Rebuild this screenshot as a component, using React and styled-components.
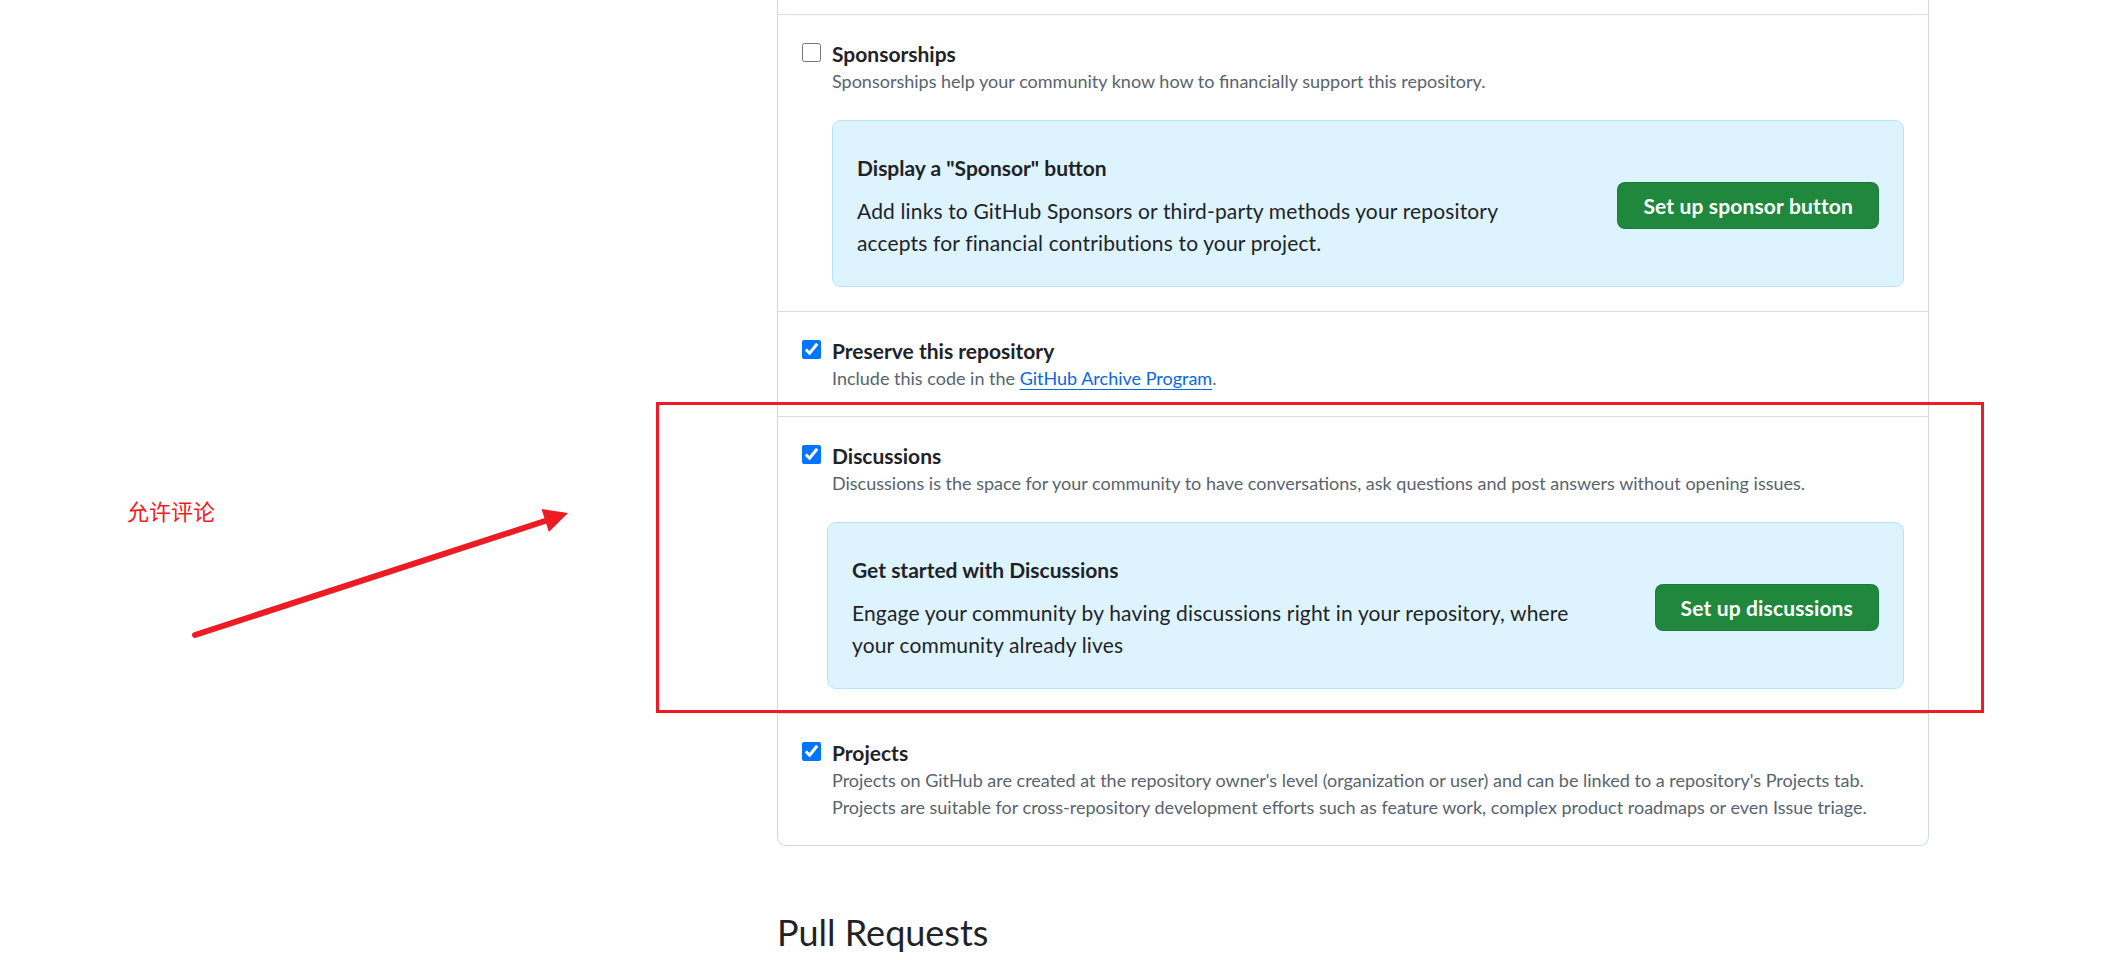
import React from 'react'
import styled, { createGlobalStyle } from 'styled-components'

const GlobalStyle = createGlobalStyle`
  html, body {
    margin: 0;
    padding: 0;
    background: #ffffff;
  }
  body {
    font-family: Lato, "Noto Sans CJK SC", sans-serif;
    color: #1f2328;
    overflow: hidden;
  }
`

const Page = styled.div`
  position: relative;
  width: 2121px;
  height: 960px;
  overflow: hidden;
  display: grid;
  grid-template-columns: 777px 1152px;
`

const Main = styled.main`
  grid-column: 2;
`

const Box = styled.div`
  border: 1px solid #d1d9e0;
  border-top: 0;
  border-radius: 0 0 9px 9px;
`

// tail of the row above, scrolled out of view
const CutRow = styled.div`
  height: 14px;
  border-bottom: 1px solid #d8dee4;
`

const Row = styled.div`
  padding: 24px;
  & + & {
    border-top: 1px solid #d8dee4;
  }
`

const Field = styled.label`
  display: flex;
  align-items: flex-start;
  gap: 11px;
`

const Check = styled.input`
  flex: none;
  width: 19px;
  height: 19px;
  margin: 4px 0 0;
  accent-color: #0075ff;
`

const FieldText = styled.div`
  display: flex;
  flex-direction: column;
`

const Title = styled.span`
  font-size: 21px;
  font-weight: 700;
  line-height: 29px;
  color: #1f2328;
`

const Note = styled.span`
  font-size: 18px;
  line-height: 27px;
  color: #59636e;
`

const Link = styled.a`
  color: #0969da;
  text-decoration: underline;
  text-underline-offset: 4px;
`

const Callout = styled.div`
  margin: 25px 0 0 ${p => p.$inset}px;
  display: flex;
  align-items: center;
  justify-content: space-between;
  padding: 31px 24px 27px;
  background: #ddf4ff;
  border: 1px solid #b6e3ff;
  border-radius: 9px;
`

const CalloutText = styled.div`
  display: flex;
  flex-direction: column;
`

const CalloutTitle = styled.h3`
  margin: 0 0 11px;
  font-size: 21px;
  font-weight: 700;
  line-height: 32px;
`

const CalloutBody = styled.p`
  margin: 0;
  font-size: 21px;
  line-height: 32px;
  letter-spacing: 0.15px;
`

const GreenButton = styled.button`
  flex: none;
  padding: 7.5px 25px;
  font-family: inherit;
  font-size: 21px;
  font-weight: 700;
  line-height: 30px;
  letter-spacing: 0.15px;
  color: #ffffff;
  background: #1f883d;
  border: 1px solid rgba(31, 35, 40, 0.15);
  border-radius: 8px;
`

const Heading = styled.h2`
  margin: 59px 0 0;
  font-size: 36px;
  font-weight: 400;
  line-height: 54px;
  color: #1f2328;
`

const RedFrame = styled.div`
  position: absolute;
  left: 656px;
  top: 402px;
  width: 1328px;
  height: 311px;
  box-sizing: border-box;
  border: 3px solid #ed1c24;
  pointer-events: none;
`

const RedLabel = styled.div`
  position: absolute;
  left: 127px;
  top: 499px;
  font-family: "Noto Sans CJK SC", sans-serif;
  font-size: 22px;
  line-height: 22px;
  color: #ed1c24;
`

const ArrowSvg = styled.svg`
  position: absolute;
  left: 180px;
  top: 490px;
  pointer-events: none;
`

function CheckField({ checked, title, children }) {
  return (
    <Field>
      <Check type="checkbox" defaultChecked={checked} />
      <FieldText>
        <Title>{title}</Title>
        <Note>{children}</Note>
      </FieldText>
    </Field>
  )
}

export default function App() {
  return (
    <>
      <GlobalStyle />
      <Page>
        <Main>
          <Box>
            <CutRow />
            <Row>
              <CheckField title="Sponsorships">
                Sponsorships help your community know how to financially support this repository.
              </CheckField>
              <Callout $inset={30}>
                <CalloutText>
                  <CalloutTitle>Display a "Sponsor" button</CalloutTitle>
                  <CalloutBody>
                    Add links to GitHub Sponsors or third-party methods your repository
                    <br />
                    accepts for financial contributions to your project.
                  </CalloutBody>
                </CalloutText>
                <GreenButton>Set up sponsor button</GreenButton>
              </Callout>
            </Row>
            <Row>
              <CheckField checked title="Preserve this repository">
                Include this code in the <Link href="#">GitHub Archive Program</Link>.
              </CheckField>
            </Row>
            <Row>
              <CheckField checked title="Discussions">
                Discussions is the space for your community to have conversations, ask questions and post answers without opening issues.
              </CheckField>
              <Callout $inset={25}>
                <CalloutText>
                  <CalloutTitle>Get started with Discussions</CalloutTitle>
                  <CalloutBody>
                    Engage your community by having discussions right in your repository, where
                    <br />
                    your community already lives
                  </CalloutBody>
                </CalloutText>
                <GreenButton>Set up discussions</GreenButton>
              </Callout>
            </Row>
            <Row>
              <CheckField checked title="Projects">
                Projects on GitHub are created at the repository owner's level (organization or user) and can be linked to a repository's Projects tab.
                <br />
                Projects are suitable for cross-repository development efforts such as feature work, complex product roadmaps or even Issue triage.
              </CheckField>
            </Row>
          </Box>
          <Heading>Pull Requests</Heading>
        </Main>

        <RedFrame />
        <RedLabel>允许评论</RedLabel>
        <ArrowSvg width="400" height="160" viewBox="0 0 400 160">
          <line x1="15" y1="145" x2="368" y2="30" stroke="#ed1c24" strokeWidth="6" strokeLinecap="round" />
          <polygon points="388,23 361.5,19 368.9,42" fill="#ed1c24" />
        </ArrowSvg>
      </Page>
    </>
  )
}
